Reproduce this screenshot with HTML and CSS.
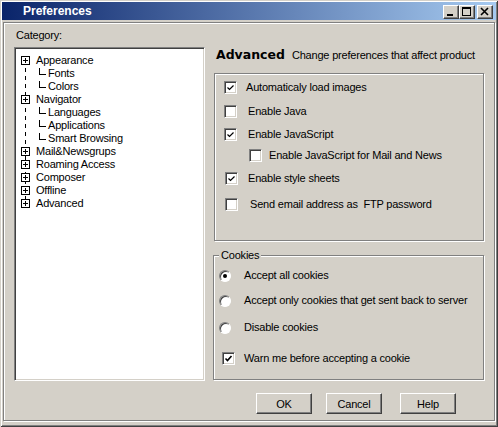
FILE: index.html
```html
<!DOCTYPE html>
<html>
<head>
<meta charset="utf-8">
<title>Preferences</title>
<link rel="stylesheet" href="styles.css">
</head>
<body>
<div class="window">
  <div class="titlebar">
    <span class="title">Preferences</span>
    <div class="caption-btns">
      <span class="cbtn"><svg width="14" height="12" viewBox="0 0 14 12"><rect x="3" y="8" width="6" height="2" fill="#000"/></svg></span>
      <span class="cbtn"><svg width="14" height="12" viewBox="0 0 14 12"><rect x="2.5" y="1.5" width="8" height="8" fill="none" stroke="#000"/><rect x="2" y="1" width="9" height="2" fill="#000"/></svg></span>
      <span class="cbtn close"><svg width="14" height="12" viewBox="0 0 14 12"><path d="M3 2 L10 9 M10 2 L3 9" stroke="#000" stroke-width="1.6"/></svg></span>
    </div>
  </div>
  <div class="panel">
    <div class="main">
      <div class="left">
        <div class="cat-label">Category:</div>
        <div class="tree">
          <div class="node"><svg class="exp" width="9" height="9" viewBox="0 0 9 9"><rect x="0.5" y="0.5" width="8" height="8" fill="#fff" stroke="#000"/><path d="M2 4.5h5M4.5 2v5" stroke="#000"/></svg><span>Appearance</span></div>
          <div class="node sub"><span class="conn"></span><span>Fonts</span></div>
          <div class="node sub"><span class="conn"></span><span>Colors</span></div>
          <div class="node"><svg class="exp" width="9" height="9" viewBox="0 0 9 9"><rect x="0.5" y="0.5" width="8" height="8" fill="#fff" stroke="#000"/><path d="M2 4.5h5M4.5 2v5" stroke="#000"/></svg><span>Navigator</span></div>
          <div class="node sub"><span class="conn"></span><span>Languages</span></div>
          <div class="node sub"><span class="conn"></span><span>Applications</span></div>
          <div class="node sub"><span class="conn"></span><span>Smart Browsing</span></div>
          <div class="node"><svg class="exp" width="9" height="9" viewBox="0 0 9 9"><rect x="0.5" y="0.5" width="8" height="8" fill="#fff" stroke="#000"/><path d="M2 4.5h5M4.5 2v5" stroke="#000"/></svg><span>Mail&amp;Newsgrups</span></div>
          <div class="node"><svg class="exp" width="9" height="9" viewBox="0 0 9 9"><rect x="0.5" y="0.5" width="8" height="8" fill="#fff" stroke="#000"/><path d="M2 4.5h5M4.5 2v5" stroke="#000"/></svg><span>Roaming Access</span></div>
          <div class="node"><svg class="exp" width="9" height="9" viewBox="0 0 9 9"><rect x="0.5" y="0.5" width="8" height="8" fill="#fff" stroke="#000"/><path d="M2 4.5h5M4.5 2v5" stroke="#000"/></svg><span>Composer</span></div>
          <div class="node"><svg class="exp" width="9" height="9" viewBox="0 0 9 9"><rect x="0.5" y="0.5" width="8" height="8" fill="#fff" stroke="#000"/><path d="M2 4.5h5M4.5 2v5" stroke="#000"/></svg><span>Offline</span></div>
          <div class="node"><svg class="exp" width="9" height="9" viewBox="0 0 9 9"><rect x="0.5" y="0.5" width="8" height="8" fill="#fff" stroke="#000"/><path d="M2 4.5h5M4.5 2v5" stroke="#000"/></svg><span>Advanced</span></div>
        </div>
      </div>
      <div class="right">
        <div class="head"><span class="head-title">Advanced</span><span class="head-desc">Change preferences that affect product</span></div>
        <div class="group g-general">
          <div class="row r-auto"><span class="cb"><svg width="9" height="9" viewBox="0 0 9 9"><path d="M1.5 4.5 L3.5 6.5 L7.5 2.5" fill="none" stroke="#000" stroke-width="1.2"/></svg></span><span class="lbl">Automaticaly load images</span></div>
          <div class="row r-java"><span class="cb"></span><span class="lbl">Enable Java</span></div>
          <div class="row r-js"><span class="cb"><svg width="9" height="9" viewBox="0 0 9 9"><path d="M1.5 4.5 L3.5 6.5 L7.5 2.5" fill="none" stroke="#000" stroke-width="1.2"/></svg></span><span class="lbl">Enable JavaScript</span></div>
          <div class="row r-jsmail"><span class="cb"></span><span class="lbl">Enable JavaScript for Mail and News</span></div>
          <div class="row r-css"><span class="cb"><svg width="9" height="9" viewBox="0 0 9 9"><path d="M1.5 4.5 L3.5 6.5 L7.5 2.5" fill="none" stroke="#000" stroke-width="1.2"/></svg></span><span class="lbl">Enable style sheets</span></div>
          <div class="row r-ftp"><span class="cb"></span><span class="lbl">Send email address as&nbsp; FTP password</span></div>
        </div>
        <div class="group g-cookies">
          <div class="group-label">Cookies</div>
          <div class="row r-rad1"><span class="radio"><span class="dot"></span></span><span class="lbl">Accept all cookies</span></div>
          <div class="row r-rad2"><span class="radio"></span><span class="lbl">Accept only cookies that get sent back to server</span></div>
          <div class="row r-rad3"><span class="radio"></span><span class="lbl">Disable cookies</span></div>
          <div class="row r-warn"><span class="cb"><svg width="9" height="9" viewBox="0 0 9 9"><path d="M1.5 4.5 L3.5 6.5 L7.5 2" fill="none" stroke="#000" stroke-width="1.6"/></svg></span><span class="lbl">Warn me before accepting a cookie</span></div>
        </div>
      </div>
    </div>
    <div class="buttons">
      <button class="btn">OK</button>
      <button class="btn">Cancel</button>
      <button class="btn help">Help</button>
    </div>
  </div>
</div>
</body>
</html>
```

FILE: styles.css
```css
* { box-sizing: border-box; }
html, body { margin: 0; padding: 0; }
body {
  background: #d4d0c8;
  font-family: "Liberation Sans", Arial, sans-serif;
  font-size: 11px;
  letter-spacing: -0.2px;
  color: #000;
}
.window {
  width: 498px;
  height: 427px;
  padding: 2px;
  background: #d4d0c8;
  box-shadow: inset 1px 1px #d4d0c8, inset -1px -1px #404040, inset 2px 2px #fff, inset -2px -2px #808080;
}
.titlebar {
  height: 18px;
  display: flex;
  align-items: flex-start;
  background: linear-gradient(to right, #0a246a, #a6caf0);
}
.title {
  font-weight: bold;
  font-size: 12px;
  letter-spacing: 0;
  color: #fff;
  line-height: 18px;
  padding-left: 21px;
}
.caption-btns {
  margin-left: auto;
  margin-right: 3px;
  margin-top: 3px;
  display: flex;
}
.cbtn {
  width: 16px;
  height: 14px;
  background: #d4d0c8;
  border: 1px solid;
  border-color: #fff #404040 #404040 #fff;
  box-shadow: inset -1px -1px #808080;
  display: block;
}
.cbtn svg { display: block; }
.cbtn.close { margin-left: 2px; }

.panel {
  margin: 2px 1px 0;
  height: 399px;
  border: 1px solid #808080;
  box-shadow: inset 1px 1px #fff, 1px 1px #fff;
  padding: 6px 10px 0 10px;
  display: flex;
  flex-direction: column;
}
.main {
  display: flex;
  gap: 9px;
  height: 352px;
}
.left { width: 191px; flex: none; }
.cat-label { line-height: 13px; padding-left: 2px; }
.tree {
  margin-top: 5px;
  height: 334px;
  border: 1px solid;
  border-color: #808080 #fff #fff #808080;
  box-shadow: inset 1px 1px #404040, inset -1px -1px #d4d0c8;
  background: #fff repeating-linear-gradient(to bottom, #000 0 4px, transparent 4px 8px) 10px 12px / 1px 143px no-repeat;
  padding: 6px 0 0 6px;
}
.node {
  display: flex;
  align-items: center;
  height: 13px;
  line-height: 13px;
  white-space: nowrap;
}
.exp { display: block; flex: none; margin-right: 6px; }
.conn {
  flex: none;
  align-self: flex-start;
  width: 7px;
  height: 7px;
  margin: 1px 2px 0 18px;
  border-left: 1px solid #000;
  border-bottom: 1px solid #000;
}

.right { width: 270px; flex: none; padding-top: 18px; }
.head {
  display: flex;
  align-items: baseline;
  padding-left: 2px;
  height: 15px;
  white-space: nowrap;
}
.head-title {
  font-family: "DejaVu Sans", Verdana, sans-serif;
  font-weight: bold;
  font-size: 12.5px;
  letter-spacing: 0;
  line-height: 15px;
}
.head-desc { margin-left: 7px; }

.group {
  border: 1px solid #808080;
  box-shadow: inset 1px 1px #fff, 1px 1px #fff;
}
.g-general { margin-top: 11px; height: 168px; padding-top: 7px; }
.g-cookies { margin-top: 14px; margin-left: -1px; height: 125px; }
.group-label {
  margin: -7px 0 0 5px;
  padding: 0 2px;
  background: #d4d0c8;
  width: max-content;
  line-height: 13px;
}

.row {
  display: flex;
  align-items: center;
  height: 13px;
  line-height: 13px;
  white-space: nowrap;
}
.cb {
  flex: none;
  width: 13px;
  height: 13px;
  margin-left: 9px;
  background: #fff;
  border: 1px solid;
  border-color: #808080 #fff #fff #808080;
  box-shadow: inset 1px 1px #404040, inset -1px -1px #d4d0c8;
  display: flex;
  align-items: center;
  justify-content: center;
}
.cb svg { display: block; }
.lbl { margin-left: 11px; }

.r-auto .lbl { margin-left: 9px; }
.r-java { margin-top: 11px; }
.r-js { margin-top: 10px; }
.r-jsmail { margin-top: 8px; }
.r-jsmail .cb { margin-left: 34px; }
.r-jsmail .lbl { margin-left: 7px; }
.r-css { margin-top: 10px; }
.r-css .cb { margin-left: 10px; }
.r-css .lbl { margin-left: 10px; }
.r-ftp { margin-top: 13px; }
.r-ftp .cb { margin-left: 10px; }
.r-ftp .lbl { margin-left: 12px; }

.radio {
  flex: none;
  width: 12px;
  height: 12px;
  margin-left: 5px;
  border-radius: 50%;
  background: #fff;
  border: 1px solid;
  border-color: #808080 #fff #fff #808080;
  box-shadow: inset 1px 1px #404040;
  display: flex;
  align-items: center;
  justify-content: center;
}
.dot { width: 4px; height: 4px; border-radius: 50%; background: #000; }
.radio + .lbl { margin-left: 13px; }
.r-rad1 { margin-top: 7px; }
.r-rad2 { margin-top: 12px; }
.r-rad3 { margin-top: 14px; }
.r-warn { margin-top: 18px; }
.r-warn .cb { margin-left: 8px; }
.r-warn .lbl { margin-left: 9px; }

.buttons {
  display: flex;
  justify-content: flex-end;
  margin-top: 12px;
  padding-right: 28px;
}
.btn {
  width: 56px;
  height: 21px;
  padding: 0;
  font: inherit;
  letter-spacing: inherit;
  color: #000;
  background: #d4d0c8;
  border: 1px solid;
  border-color: #fff #404040 #404040 #fff;
  box-shadow: inset -1px -1px #808080;
}
.btn + .btn { margin-left: 14px; }
.btn.help { margin-left: 18px; }
```
